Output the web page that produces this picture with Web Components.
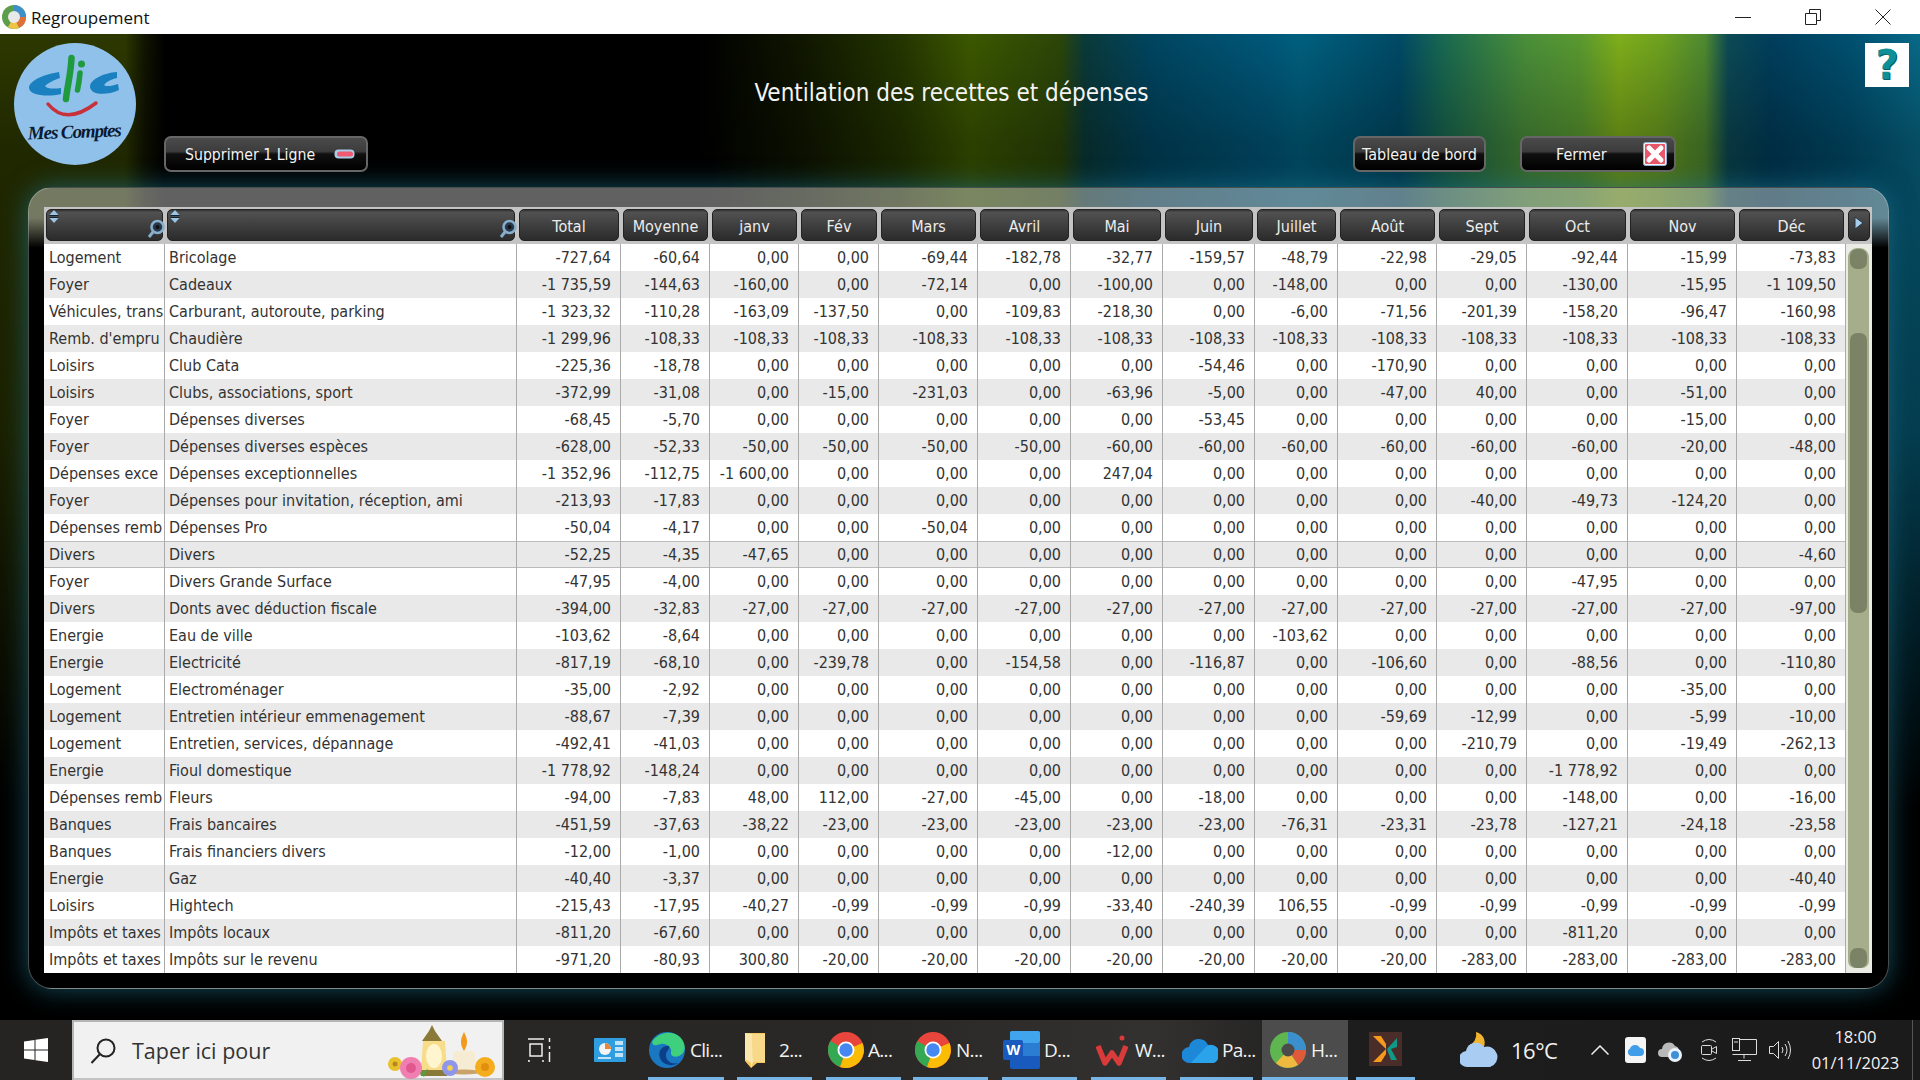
<!DOCTYPE html>
<html lang="fr"><head><meta charset="utf-8"><title>Regroupement</title>
<style>
html,body{margin:0;padding:0;height:1080px;width:1920px;overflow:hidden;background:#000}
</style></head><body>
<app-window>
  <title-bar slot="title">Regroupement</title-bar>
  <aurora-stage slot="stage">
    <top-band>
      <clic-logo slot="logo"></clic-logo>
      <gloss-button slot="del" pad="0 11px 0 19px" fs="15.700px">Supprimer 1 Ligne<svg slot="icon" width="21" height="10" viewBox="0 0 21 10"><rect x=".5" y=".5" width="20" height="9" rx="4" fill="#a9cbe6"/><rect x="3" y="2.500" width="16" height="5" rx="2.500" fill="#ef5a70"/></svg></gloss-button>
      <span slot="title">Ventilation des recettes et dépenses</span>
      <gloss-button slot="dash" pad="0" center>Tableau de bord</gloss-button>
      <gloss-button slot="close" pad="0 7px 0 34px">Fermer<svg slot="icon" width="24" height="24" viewBox="0 0 24 24"><rect x=".5" y=".5" width="23" height="23" rx="2" fill="#f2f2f2" stroke="#8fb4d8"/><rect x="2" y="2" width="20" height="20" rx="1" fill="#e8566a"/><path d="M6 6L18 18M18 6L6 18" stroke="#fff" stroke-width="5" stroke-linecap="round"/></svg></gloss-button>
      <help-tile slot="help"></help-tile>
    </top-band>
    <glass-panel><data-table></data-table></glass-panel>
  </aurora-stage>
  <task-bar slot="bar"></task-bar>
</app-window>
<script>
const UI='font-family:"DejaVu Sans",sans-serif;font-stretch:condensed;';
const SEG='font-family:"Open Sans","Noto Sans",sans-serif;';
const def=(name,html)=>customElements.define(name,class extends HTMLElement{constructor(){super();this.attachShadow({mode:'open'}).innerHTML=html}});

def('app-window',`<style>:host{display:flex;flex-direction:column;width:1920px;height:1080px}</style>
<slot name="title"></slot><slot name="stage"></slot><slot name="bar"></slot>`);

def('title-bar',`<style>:host{display:flex;align-items:center;height:34px;background:#fff;color:#111;${SEG}font-size:17px;flex:none}
svg.app{margin:0 5px 0 2px}.sp{flex:1}.c{display:flex;margin-right:29px;gap:54px;align-items:center}</style>
<svg class="app" width="24" height="24" viewBox="0 0 24 24"><circle cx="12" cy="12" r="12" fill="#5d9e4b"/><path d="M12 12L12 0A12 12 0 0 1 24 12Z" fill="#3f8fc9"/><path d="M12 12L24 12A12 12 0 0 1 17 23Z" fill="#e0703a"/><path d="M12 12L17 23A12 12 0 0 1 6 22Z" fill="#efc445"/><circle cx="12" cy="12" r="6" fill="#e9e9e9"/></svg>
<slot></slot><div class="sp"></div>
<div class="c"><svg width="16" height="16"><path d="M0 8.500H16" stroke="#222" stroke-width="1"/></svg>
<svg width="16" height="16"><path d="M.5 4.500H11.500V15.500H.5ZM4.500 4V.5H15.500V11.500H12" fill="none" stroke="#222"/></svg>
<svg width="16" height="16"><path d="M.5.5L15.500 15.500M15.500.5L.5 15.500" stroke="#222"/></svg></div>`);

def('aurora-stage',`<style>:host{display:block;flex:1;height:986px;overflow:hidden;
background:linear-gradient(180deg,transparent 0,rgba(0,0,0,.28) 110px,rgba(0,0,0,.42) 400px,#000 780px),
linear-gradient(90deg,#2d3800 0,#2d3800 125px,#101400 145px,#000 165px,#000 700px,#0f1600 800px,#243500 900px,#3c5800 970px,#2c4608 1060px,#0a3a3a 1085px,#004560 1150px,#00587a 1270px,#00607f 1300px,#004a66 1400px,#1a6a50 1445px,#4a8f3a 1525px,#5a9a30 1580px,#7fae1a 1619px,#6fa220 1660px,#4f8a30 1705px,#0c4a55 1728px,#003e5c 1770px,#005070 1850px,#086a88 1920px)}</style><slot></slot>`);

def('top-band',`<style>:host{display:grid;height:153px;grid-template-columns:164px 204px 985px 133px 34px 156px 189px 44px 11px;grid-template-rows:102px 36px 15px}
::slotted([slot=logo]){grid-column:1;grid-row:1/4;margin:9px 0 0 14px}
::slotted([slot=del]){grid-column:2;grid-row:2}
::slotted([slot=title]){grid-column:3;grid-row:1;align-self:center;justify-self:stretch;text-align:center;padding:16px 0 0 182px;color:#f4f4f4;${UI}font-size:24px;white-space:nowrap}
::slotted([slot=dash]){grid-column:4;grid-row:2}
::slotted([slot=close]){grid-column:6;grid-row:2}
::slotted([slot=help]){grid-column:8;grid-row:1;margin-top:9px}</style>
<slot name="logo"></slot><slot name="del"></slot><slot name="title"></slot><slot name="dash"></slot><slot name="close"></slot><slot name="help"></slot>`);

def('clic-logo',`<style>:host{display:block;width:122px;height:122px}svg{display:block}</style>
<svg width="122" height="122" viewBox="0 0 122 122"><circle cx="61" cy="61" r="61" fill="#8fc1ea"/>
<path d="M45 29C32 31 15 37 15 45C16 53 34 54 47 51L47 45C40 46 33 46 31 43C34 40 40 37 46 35Z" fill="#1a80bf"/>
<path d="M103 29C90 30 76 36 76 44C77 52 92 53 105 47L104 41C98 43 92 44 90 42C93 38 98 36 103 35Z" fill="#1a80bf"/>
<path d="M57.500 15C57 30 53 45 52 56" stroke="#1f9a3c" stroke-width="6.500" fill="none" stroke-linecap="round"/>
<path d="M66 30C65.500 36 64.500 42 63.500 47" stroke="#1f9a3c" stroke-width="5.500" fill="none" stroke-linecap="round"/><circle cx="67.500" cy="21" r="3.500" fill="#1f9a3c"/>
<path d="M34 61Q52 83 82 60" stroke="#c8303a" stroke-width="3.500" fill="none" stroke-linecap="round"/>
<text x="14" y="95" transform="rotate(-2 60 95)" textLength="94" lengthAdjust="spacing" font-family="Liberation Serif" font-style="italic" font-weight="700" font-size="19" fill="#0b1a33">Mes Comptes</text></svg>`);

customElements.define('gloss-button',class extends HTMLElement{constructor(){super();
const p=this.getAttribute('pad')||'0',c=this.hasAttribute('center'),fs=this.getAttribute('fs')||'16px';
this.attachShadow({mode:'open'}).innerHTML=`<style>:host{display:flex;align-items:center;justify-content:${c?'center':'space-between'};box-sizing:border-box;height:36px;padding:${p};border:2px solid #666;border-radius:7px;color:#f2f2f2;${UI}font-size:${fs};white-space:nowrap;
background:linear-gradient(180deg,#4a4a4a 0,#3c3c3c 42%,#101010 50%,#000 100%)}</style><slot></slot><slot name="icon"></slot>`}});

def('help-tile',`<style>:host{display:flex;align-items:center;justify-content:center;width:44px;height:44px;background:#fff;color:#0c8f96;font:700 40px/44px "DejaVu Sans",sans-serif;text-shadow:1px 1px 0 #075e66}</style>?`);

def('glass-panel',`<style>:host{display:block;box-sizing:border-box;height:802px;margin:0 31px 0 28px;padding:19px 16px 15px 15px;border:1px solid rgba(190,205,205,.38);border-radius:24px;
background:linear-gradient(180deg,rgba(255,255,255,.38) 0,rgba(255,255,255,.38) 30px,#000 60px);
box-shadow:0 0 26px rgba(30,125,150,.62)}</style><slot></slot>`);

const COLS=[121,352,104,89,89,80,99,93,92,92,83,99,90,101,109,109];
const HEAD=['','','Total','Moyenne','janv','Fév','Mars','Avril','Mai','Juin','Juillet','Août','Sept','Oct','Nov','Déc'];
const DATA=[
'Logement|Bricolage|-727,64|-60,64|0|0|-69,44|-182,78|-32,77|-159,57|-48,79|-22,98|-29,05|-92,44|-15,99|-73,83',
'Foyer|Cadeaux|-1 735,59|-144,63|-160,00|0|-72,14|0|-100,00|0|-148,00|0|0|-130,00|-15,95|-1 109,50',
'Véhicules, trans|Carburant, autoroute, parking|-1 323,32|-110,28|-163,09|-137,50|0|-109,83|-218,30|0|-6,00|-71,56|-201,39|-158,20|-96,47|-160,98',
"Remb. d'empru|Chaudière|-1 299,96|-108,33|-108,33|-108,33|-108,33|-108,33|-108,33|-108,33|-108,33|-108,33|-108,33|-108,33|-108,33|-108,33",
'Loisirs|Club Cata|-225,36|-18,78|0|0|0|0|0|-54,46|0|-170,90|0|0|0|0',
'Loisirs|Clubs, associations, sport|-372,99|-31,08|0|-15,00|-231,03|0|-63,96|-5,00|0|-47,00|40,00|0|-51,00|0',
'Foyer|Dépenses diverses|-68,45|-5,70|0|0|0|0|0|-53,45|0|0|0|0|-15,00|0',
'Foyer|Dépenses diverses espèces|-628,00|-52,33|-50,00|-50,00|-50,00|-50,00|-60,00|-60,00|-60,00|-60,00|-60,00|-60,00|-20,00|-48,00',
'Dépenses exce|Dépenses exceptionnelles|-1 352,96|-112,75|-1 600,00|0|0|0|247,04|0|0|0|0|0|0|0',
'Foyer|Dépenses pour invitation, réception, ami|-213,93|-17,83|0|0|0|0|0|0|0|0|-40,00|-49,73|-124,20|0',
'Dépenses remb|Dépenses Pro|-50,04|-4,17|0|0|-50,04|0|0|0|0|0|0|0|0|0',
'Divers|Divers|-52,25|-4,35|-47,65|0|0|0|0|0|0|0|0|0|0|-4,60',
'Foyer|Divers Grande Surface|-47,95|-4,00|0|0|0|0|0|0|0|0|0|-47,95|0|0',
'Divers|Donts avec déduction fiscale|-394,00|-32,83|-27,00|-27,00|-27,00|-27,00|-27,00|-27,00|-27,00|-27,00|-27,00|-27,00|-27,00|-97,00',
'Energie|Eau de ville|-103,62|-8,64|0|0|0|0|0|0|-103,62|0|0|0|0|0',
'Energie|Electricité|-817,19|-68,10|0|-239,78|0|-154,58|0|-116,87|0|-106,60|0|-88,56|0|-110,80',
'Logement|Electroménager|-35,00|-2,92|0|0|0|0|0|0|0|0|0|0|-35,00|0',
'Logement|Entretien intérieur emmenagement|-88,67|-7,39|0|0|0|0|0|0|0|-59,69|-12,99|0|-5,99|-10,00',
'Logement|Entretien, services, dépannage|-492,41|-41,03|0|0|0|0|0|0|0|0|-210,79|0|-19,49|-262,13',
'Energie|Fioul domestique|-1 778,92|-148,24|0|0|0|0|0|0|0|0|0|-1 778,92|0|0',
'Dépenses remb|Fleurs|-94,00|-7,83|48,00|112,00|-27,00|-45,00|0|-18,00|0|0|0|-148,00|0|-16,00',
'Banques|Frais bancaires|-451,59|-37,63|-38,22|-23,00|-23,00|-23,00|-23,00|-23,00|-76,31|-23,31|-23,78|-127,21|-24,18|-23,58',
'Banques|Frais financiers divers|-12,00|-1,00|0|0|0|0|-12,00|0|0|0|0|0|0|0',
'Energie|Gaz|-40,40|-3,37|0|0|0|0|0|0|0|0|0|0|0|-40,40',
'Loisirs|Hightech|-215,43|-17,95|-40,27|-0,99|-0,99|-0,99|-33,40|-240,39|106,55|-0,99|-0,99|-0,99|-0,99|-0,99',
'Impôts et taxes|Impôts locaux|-811,20|-67,60|0|0|0|0|0|0|0|0|0|-811,20|0|0',
'Impôts et taxes|Impôts sur le revenu|-971,20|-80,93|300,80|-20,00|-20,00|-20,00|-20,00|-20,00|-20,00|-20,00|-283,00|-283,00|-283,00|-283,00'
];

const SORT=`<svg class="sort" width="10" height="14" viewBox="0 0 10 14"><path d="M5 0L9.500 5H.5Z" fill="#9cc4e4"/><path d="M.5 5.500H9.500" stroke="#123"/><path d="M5 13L9.500 8H.5Z" fill="#9cc4e4"/><path d="M.5 7.500H9.500" stroke="#123"/></svg>`;
const LENS=`<svg class="lens" width="18" height="20" viewBox="0 0 18 20"><circle cx="10.500" cy="8" r="6" fill="#26384a" stroke="#87aecb" stroke-width="2.500"/><circle cx="10.500" cy="8" r="2" fill="#111"/><path d="M6 13L2 18" stroke="#87aecb" stroke-width="3"/></svg>`;

customElements.define('head-cell',class extends HTMLElement{constructor(){super();
const k=this.getAttribute('kind');
this.attachShadow({mode:'open'}).innerHTML=`<style>:host{position:relative;display:flex;align-items:center;justify-content:center;box-sizing:border-box;margin:2px 2px 3px 2px;border-radius:5px;color:#ececec;${UI}font-size:16px;
border:1px solid #222;background:linear-gradient(180deg,#333 0,#515151 8%,#3f3f3f 50%,#2b2b2b 100%);padding-top:3px}
.sort{position:absolute;left:2px;top:0}.lens{position:absolute;right:-3px;bottom:1px}.arrow{position:absolute;left:5px;top:6px}</style>
${k==='search'?SORT+LENS:''}${k==='arrow'?'<svg class="arrow" width="10" height="14" viewBox="0 0 10 14"><path d="M1 1L9 7L1 13Z" fill="#a8cdea" stroke="#234"/></svg>':''}<slot></slot>`}});

customElements.define('data-row',class extends HTMLElement{constructor(){super();
const cells=this.getAttribute('cells').split('|'),g=COLS.map(c=>c+'px').join(' ');
const i=+this.getAttribute('idx');
const html=cells.map((v,j)=>`<div class="c ${j===0?'l a':j===1?'l b':'r'}">${v==='0'?'0,00':v}</div>`).join('');
this.attachShadow({mode:'open'}).innerHTML=`<style>:host{display:grid;grid-template-columns:${g};height:27px;background:${i%2?'#e9e9e9':'#fff'};${i===11?'box-shadow:inset 0 1px 0 #bbb,inset 0 -1px 0 #bbb;':''}}
.c{box-sizing:border-box;height:27px;border-right:1px solid #aaa;line-height:28px;white-space:nowrap;overflow:hidden;color:#333}
.a{padding-left:5px}.b{padding-left:4px}.r{text-align:right;padding-right:9px}</style>${html}`}});

customElements.define('data-table',class extends HTMLElement{constructor(){super();
const s=this.attachShadow({mode:'open'});
const g=COLS.map(c=>c+'px').join(' ');
s.innerHTML=`<style>:host{display:grid;grid-template-columns:1802px 26px;grid-template-rows:37px 729px;width:1828px;background:#cfcfcf;${UI}font-size:16px}
.head{grid-column:1/3;display:grid;grid-template-columns:${g} 26px;background:#c4c4c4}
.rows{display:flex;flex-direction:column}
.sb{background:#e9ebe4;display:flex;flex-direction:column;padding:4px 3px 5px 2px;}
.track{flex:1;background:#a4ae8a;border-radius:9px 9px 7px 7px;display:flex;flex-direction:column;padding:0 2px}
.btn{height:20px;background:#7b8366;border-radius:7px;flex:none;margin-top:1px}
.th{height:280px;background:#7b8366;border-radius:7px;flex:none;margin-top:64px}
.sp{flex:1}</style>
<div class="head">${HEAD.map((h,i)=>`<head-cell ${i<2?'kind="search"':''}>${h}</head-cell>`).join('')}<head-cell kind="arrow"></head-cell></div>
<div class="rows">${DATA.map((r,i)=>`<data-row idx="${i}" cells="${r.replace(/"/g,'&quot;')}"></data-row>`).join('')}</div>
<div class="sb"><div class="track"><div class="btn"></div><div class="th"></div><div class="sp"></div><div class="btn"></div></div></div>`}});

const CHROME=`<svg width="36" height="36" viewBox="0 0 36 36"><circle cx="18" cy="18" r="18" fill="#e8453c"/><path d="M18 18L2.400 9A18 18 0 0 0 12 35Z" fill="#35a853"/><path d="M18 18L34.500 11A18 18 0 0 1 12 35Z" fill="#fbbc05"/><circle cx="18" cy="18" r="8.500" fill="#fff"/><circle cx="18" cy="18" r="6.700" fill="#4688f1"/></svg>`;
const ICONS={
edge:`<svg width="36" height="36" viewBox="0 0 36 36"><circle cx="18" cy="18" r="18" fill="#1a78c2"/><path d="M3 10C8 1 22-3 31 5C36 10 37 17 34 21C30 26 21 26 22 20C23 16 18 11 12 12C7 13 4 15 3 10Z" fill="#3ed07d"/><path d="M20 14C11 13 8 22 12 28C15 33 24 35 29 31C22 33 16 28 17 22C17.500 19 21 17 20 14Z" fill="#0c3f87"/></svg>`,
folder:`<svg width="21" height="38" viewBox="0 0 21 38"><path d="M0 2H20V32H12L6 37L0 30Z" fill="#f5c860"/><path d="M7 3H20V31H8Z" fill="#f8d98a"/><path d="M0 2L7 3L8 31L6 37V32L0 28Z" fill="#fbe7ae"/></svg>`,
chrome:CHROME,
word:`<svg width="37" height="38" viewBox="0 0 37 38"><rect x="7" y="0" width="30" height="38" rx="2" fill="#185abd"/><rect x="7" y="0" width="30" height="12" rx="2" fill="#41a5ee"/><rect x="7" y="12" width="30" height="13" fill="#2b7cd3"/><rect x="0" y="9" width="20" height="20" rx="2" fill="#185abd"/><text x="10" y="24" text-anchor="middle" font-family="Liberation Sans" font-weight="700" font-size="15" fill="#fff">W</text></svg>`,
wps:`<svg width="32" height="36" viewBox="0 0 32 36"><path d="M2 14L9 31L16 21L23 31L30 14" fill="none" stroke="#d93a3a" stroke-width="5.500" stroke-linejoin="round"/><circle cx="26" cy="6" r="2.500" fill="#d93a3a"/></svg>`,
cloud:`<svg width="36" height="26" viewBox="0 0 36 26"><path d="M8 26A8 8 0 0 1 7 10A10 10 0 0 1 26 8A9 9 0 0 1 30 26Z" fill="#1e88d8"/><path d="M9 26L22 12A7 7 0 0 1 36 20C36 24 33 26 30 26Z" fill="#2ba3ea"/></svg>`,
pie:`<svg width="36" height="36" viewBox="0 0 36 36"><circle cx="18" cy="18" r="18" fill="#5fb54f"/><path d="M18 18L18 0A18 18 0 0 1 36 18Z" fill="#3a8fcc"/><path d="M18 18L36 18A18 18 0 0 1 28 33Z" fill="#dd5a3a"/><path d="M18 18L28 33A18 18 0 0 1 6 31Z" fill="#eeb93f"/><circle cx="18" cy="18" r="6.500" fill="#4b4b4b"/></svg>`};

customElements.define('task-item',class extends HTMLElement{constructor(){super();
const ic=this.getAttribute('icon'),w=this.getAttribute('w'),l=this.getAttribute('ml')||0,pl=this.getAttribute('pl')||0,g=this.getAttribute('g')||5,act=this.hasAttribute('active');
this.attachShadow({mode:'open'}).innerHTML=`<style>:host{display:flex;align-items:center;box-sizing:border-box;height:60px;width:${w}px;margin-left:${l}px;padding-left:${pl}px;gap:${g}px;color:#f2f2f2;font-size:19px;letter-spacing:-.7px;${SEG}border-bottom:3px solid #77b5e6;flex:none;padding-top:3px;${act?'background:#4c4c4c;':''}}svg{display:block;flex:none}</style>${ICONS[ic]}<slot></slot>`}});

def('clock-box',`<style>:host{display:flex;flex-direction:column;align-items:center;justify-content:center;gap:4px;color:#f2f2f2;${SEG}font-size:16.500px;line-height:22px;flex:none}</style><slot></slot>`);

def('task-bar',`<style>:host{display:flex;height:60px;flex:none;background:linear-gradient(90deg,#252422,#292827 45%,#333130 60%,#1d1d1d 70%,#1b1b1b);align-items:center;${SEG}}
.win{width:72px;display:flex;justify-content:center;flex:none}
.search{box-sizing:border-box;width:432px;height:60px;background:#f1f1f1;border:2px solid #b5b5b5;border-bottom:0;box-shadow:inset 0 -2px 0 #c4c4c4;display:flex;align-items:center;padding-left:16px;color:#333;font-size:21.500px;flex:none}
.search .t{margin-left:16px;margin-top:-1px}.search .sp{flex:1}
.tv{width:72px;display:flex;justify-content:center;flex:none}.dash{width:68px;display:flex;justify-content:center;flex:none}
.tray{display:flex;align-items:center;flex:none}
.temp{color:#f2f2f2;font-size:22px;margin-left:13px;letter-spacing:-.5px}
.line{width:1px;height:60px;background:#555}
</style>
<div class="win"><svg width="24" height="24" viewBox="0 0 24 24" fill="#fff"><path d="M0 3.500L10.500 2V11.500H0ZM11.500 1.800L24 0V11.500H11.500ZM0 12.500H10.500V22L0 20.500ZM11.500 12.500H24V24L11.500 22.200Z"/></svg></div>
<div class="search"><svg width="26" height="26" viewBox="0 0 26 26" fill="none" stroke="#222" stroke-width="2"><circle cx="16" cy="10" r="8.500"/><path d="M10 16L1.500 25"/></svg><span class="t">Taper ici pour</span><span class="sp"></span>
<svg width="114" height="56" viewBox="0 0 114 56" style="margin-right:2px"><path d="M43 8L46 2L49 8L56 18H36Z" fill="#8a7a3a"/><path d="M37 18H59L61 47H35Z" fill="#f7dc8a"/><ellipse cx="48" cy="33" rx="8" ry="12" fill="#fff6d0"/><path d="M33 47H63L61 53H35Z" fill="#8a7a3a"/><rect x="67" y="28" width="22" height="20" rx="2" fill="#f6ecd4"/><path d="M78 28C73 20 75 15 78 9C81 15 83 20 78 28Z" fill="#f39a1e"/><ellipse cx="78" cy="49" rx="17" ry="2.500" fill="#c9a36a"/><circle cx="9" cy="41" r="7" fill="#e8c22e"/><circle cx="9" cy="41" r="2.500" fill="#b8861a"/><circle cx="25" cy="45" r="11" fill="#ef7fb0"/><circle cx="25" cy="45" r="5" fill="#e2578f"/><path d="M34 50L42 46L38 54Z" fill="#5a9a3a"/><circle cx="64" cy="45" r="8" fill="#8f96ea"/><circle cx="64" cy="45" r="2.800" fill="#f5d24a"/><circle cx="99" cy="44" r="10" fill="#f4ad1c"/><circle cx="99" cy="44" r="4" fill="#e28e10"/></svg></div>
<div class="tv"><svg width="24" height="24" viewBox="0 0 24 24" fill="none" stroke="#eee" stroke-width="1.500"><path d="M0 1H16M2 6H14V18H2ZM0 23H2M16 23H14M0 23V22M21.500 0V4M21.500 8V11M21.500 14V24"/></svg></div>
<div class="dash"><svg width="32" height="24" viewBox="0 0 32 24"><rect width="32" height="24" rx="1" fill="#2f9ee0"/><circle cx="11" cy="11" r="6" fill="#f4f4f4"/><path d="M11 11V5A6 6 0 0 1 17 11Z" fill="#e8873a"/><rect x="21" y="3" width="8" height="4" fill="#bfe3f7"/><rect x="21" y="9" width="8" height="4" fill="#bfe3f7"/><rect x="21" y="15" width="8" height="4" fill="#bfe3f7"/><rect x="4" y="19" width="13" height="2" fill="#bfe3f7"/></svg></div>
<task-item icon="edge" w="76" ml="4" pl="1">Cli...</task-item>
<task-item icon="folder" w="75" ml="13" pl="8" g="13">2...</task-item>
<task-item icon="chrome" w="75" ml="14" pl="2" g="4">A...</task-item>
<task-item icon="chrome" w="75" ml="12" pl="2" g="5">N...</task-item>
<task-item icon="word" w="75" ml="14" pl="1" g="4">D...</task-item>
<task-item icon="wps" w="75" ml="14" pl="5" g="7">W...</task-item>
<task-item icon="cloud" w="73" ml="14" pl="2" g="4">Pa...</task-item>
<task-item icon="pie" w="86" ml="9" pl="8" g="5" active>H...</task-item>
<div style="box-sizing:border-box;margin-left:8px;width:59px;height:60px;border-bottom:3px solid #77b5e6;display:flex;justify-content:center;align-items:center;flex:none"><svg width="33" height="34" viewBox="0 0 33 34"><rect width="33" height="34" fill="#4a2d28"/><path d="M4 4L17 17L4 30H12L17 22V12L12 4Z" fill="#f59a1c"/><path d="M18 17L28 6V15L22 17L28 28H22Z" fill="#0e9a88"/></svg></div>
<div class="tray" style="margin-left:45px"><svg width="38" height="36" viewBox="0 0 38 36"><path d="M16 0A11 11 0 0 1 22 18L8 14A12 12 0 0 0 16 0Z" fill="#f2b32f"/><path d="M8 35A8 8 0 0 1 6 19A10 10 0 0 1 24 15A9 9 0 0 1 30 35Z" fill="#a9cdf2"/></svg><span class="temp">16°C</span></div>
<div class="tray" style="margin-left:34px"><svg width="18" height="10" viewBox="0 0 18 10" fill="none" stroke="#eee" stroke-width="1.500"><path d="M.5 9.500L9 1L17.500 9.500"/></svg></div>
<div class="tray" style="margin-left:16px"><svg width="21" height="26" viewBox="0 0 21 26"><rect width="21" height="26" rx="3" fill="#f5f5f5"/><path d="M6 19A4 4 0 0 1 5 11.500A5.500 5.500 0 0 1 15 11A4 4 0 0 1 15 19Z" fill="#3f9dea"/></svg></div>
<div class="tray" style="margin-left:12px"><svg width="25" height="24" viewBox="0 0 25 24"><path d="M4 19A4 4 0 0 1 4 11A7 7 0 0 1 17 8A5 5 0 0 1 20 16V19Z" fill="#b9b9b9"/><circle cx="17" cy="17" r="7" fill="#eaf3fb"/><circle cx="17" cy="17" r="4" fill="#3d8fd6"/></svg></div>
<div class="tray" style="margin-left:17px"><svg width="18" height="26" viewBox="0 0 18 26" fill="none" stroke="#ddd"><path d="M2 5Q9 0 16 5M2 21Q9 26 16 21"/><rect x="1.500" y="8.500" width="10" height="9" rx="1"/><path d="M12 12L16.500 9.500V16.500L12 14"/></svg></div>
<div class="tray" style="margin-left:14px"><svg width="25" height="24" viewBox="0 0 25 24" fill="none" stroke="#ddd"><path d="M7.500 1.500H24.500V16.500H.5M12 16.500V20.500M6 22.500H19"/><rect x=".5" y=".5" width="7" height="12" fill="#1b1b1b"/><path d="M2 4H6"/></svg></div>
<div class="tray" style="margin-left:12px"><svg width="22" height="22" viewBox="0 0 22 22" fill="none" stroke="#ddd"><path d="M.5 7.500H4.500L9.500 2.500V19.500L4.500 14.500H.5Z"/><path d="M13 8Q15 11 13 14M16 5Q20 11 16 17M19 2Q24 11 19 20"/></svg></div>
<clock-box style="width:110px;margin-left:9px"><span>18:00</span><span>01/11/2023</span></clock-box>
<div class="line" style="margin-left:2px"></div>`);
</script>
</body></html>
